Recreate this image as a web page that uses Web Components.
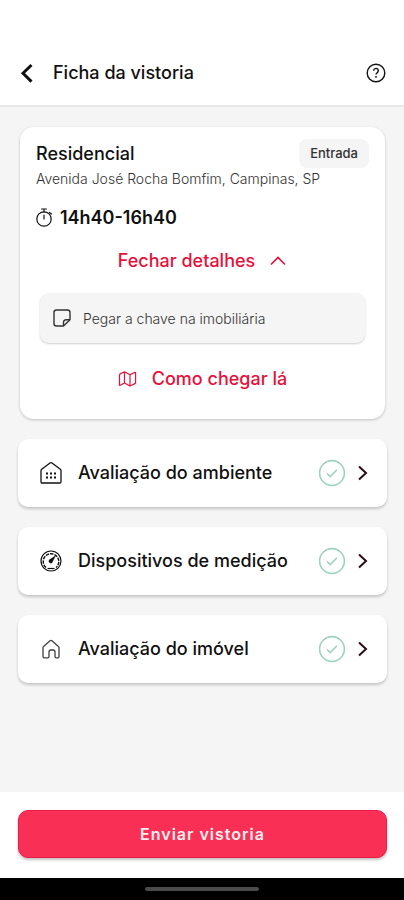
<!DOCTYPE html>
<html lang="pt-BR">
<head>
<meta charset="UTF-8">
<meta name="viewport" content="width=device-width, initial-scale=1.0">
<title>Ficha da vistoria</title>
<style>
    body{
        margin: 0;
        font-family: Inter, 'Liberation Sans', sans-serif;
        color: #111;
        background: #f5f5f5;
    }
</style>
</head>
<body>

<inspection-page>
    <page-header slot="header" page-title="Ficha da vistoria"></page-header>

    <visit-card kind="Residencial" address="Avenida José Rocha Bomfim, Campinas, SP" tag="Entrada" time="14h40-16h40">
        <visit-note>Pegar a chave na imobiliária</visit-note>
    </visit-card>

    <step-item icon="building">Avaliação do ambiente</step-item>
    <step-item icon="gauge">Dispositivos de medição</step-item>
    <step-item icon="home">Avaliação do imóvel</step-item>

    <submit-bar slot="footer">Enviar vistoria</submit-bar>
</inspection-page>

<script>
// all the icons of the page, drawn with currentColor
const icons = {
    back: '<svg width="24" height="24" viewBox="0 0 24 24" fill="none" stroke="currentColor" stroke-width="3"><path d="M16.500 4 8 12.300l8.500 8.300"/></svg>',
    help: '<svg width="20" height="20" viewBox="0 0 20 20" fill="none" stroke="currentColor" stroke-width="1.400"><circle cx="10" cy="10" r="8.800"/><path d="M7.700 7.700a2.300 2.300 0 1 1 3.600 1.900c-.8.5-1.300.9-1.300 1.900M10 13v1.800"/></svg>',
    timer: '<svg width="17" height="20" viewBox="0 0 17 20" fill="none" stroke="currentColor" stroke-width="1.200" stroke-linecap="round"><circle cx="8" cy="11" r="7.200"/><path d="M5.500 1h5M8 1v2.800M8 7v4M13.500 4.500l2 1.500"/></svg>',
    up: '<svg width="18" height="12" viewBox="0 0 18 12" fill="none" stroke="currentColor" stroke-width="1.600"><path d="m2 9.500 7-7 7 7"/></svg>',
    note: '<svg width="20" height="20" viewBox="0 0 20 20" fill="none" stroke="currentColor" stroke-width="1.400" stroke-linejoin="round"><path d="M11.500 18H4.500A2.500 2.500 0 0 1 2 15.500v-11A2.500 2.500 0 0 1 4.500 2h11A2.500 2.500 0 0 1 18 4.500v7.200z"/><path d="M11.500 18v-3.500a2.800 2.800 0 0 1 2.800-2.800H18"/></svg>',
    map: '<svg width="20" height="18" viewBox="0 0 20 18" fill="none" stroke="currentColor" stroke-width="1.200" stroke-linejoin="round"><path d="M1.500 5q0-.8.700-1.100L6.500 1.800l5.500 3 4.800-2.400q.8-.3.800.6v9.500q0 .8-.7 1.100L12 16l-5.500-3-4.200 2.300q-.8.400-.8-.6zM6.500 1.800V13M12 4.800V16"/></svg>',
    building: '<svg width="24" height="24" viewBox="0 0 24 24" fill="none" stroke="currentColor" stroke-width="1.300" stroke-linejoin="round"><path d="M2 9.500Q2 8.700 2.700 8.200L11 2q1-.7 2 0l8.300 6.200q.7.500.7 1.300v11.200q0 1.300-1.300 1.300H3.300Q2 22 2 20.700z"/><path d="M7 12.500h2m2 0h2m2 0h2M7 16.500h2m2 0h2m2 0h2" stroke-width="1.900"/></svg>',
    gauge: '<svg width="24" height="24" viewBox="0 0 24 24" fill="none" stroke="currentColor" stroke-width="1.200"><circle cx="12" cy="12" r="10"/><path d="M7 18.500a7.800 7.800 0 1 1 10 0" stroke-width="1.400" stroke-dasharray="3.500 1"/><path d="M8.500 19.500h7"/><path d="m17 6.300-6.500 4.300a2 2 0 1 0 2.800 2.800z" fill="currentColor" stroke="none"/></svg>',
    home: '<svg width="24" height="24" viewBox="0 0 24 24" fill="none" stroke="currentColor" stroke-width="1.300" stroke-linejoin="round" opacity=".8"><path d="M4 10.800q0-.8.600-1.300l6.400-5.700q1-.8 2 0l6.400 5.700q.6.500.6 1.300v8.700q0 1.300-1.300 1.300h-1.400q-1.300 0-1.300-1.300V15q0-2-2-2h-2q-2 0-2 2v4.500q0 1.300-1.300 1.300H5.300Q4 20.800 4 19.500z"/></svg>',
    check: '<svg width="28" height="28" viewBox="0 0 28 28" fill="none" stroke="currentColor" stroke-width="1.600"><circle cx="14" cy="14" r="12.400"/><path d="m9 14.300 3.300 3.300 6.700-6.800"/></svg>',
    next: '<svg width="12" height="18" viewBox="0 0 12 18" fill="none" stroke="currentColor" stroke-width="2"><path d="m2 2.500 7 6.500-7 6.500"/></svg>'
};

class InspectionPage extends HTMLElement{

constructor(){
    super();
    this.attachShadow({mode: 'open'})
}

connectedCallback(){
    this.shadowRoot.innerHTML = `
    <style>
    :host{
        display: flex;
        flex-direction: column;
        min-height: 100vh;
    }
    main{
        flex: 1;
        display: flex;
        flex-direction: column;
        gap: 20px;
        padding: 20px 17px 20px 18px;
    }
    </style>
    <slot name="header"></slot>
    <main><slot></slot></main>
    <slot name="footer"></slot>
    `
}
}

class PageHeader extends HTMLElement{

constructor(){
    super();
    this.attachShadow({mode: 'open'})
}

connectedCallback(){
    this.shadowRoot.innerHTML = `
    <style>
    :host{
        display: block;
        background: #fff;
        border-bottom: 2px solid #e8e8e8;
    }
    header{
        display: flex;
        align-items: center;
        gap: 14px;
        padding: 60px 18px 20px 15px;
    }
    h1{
        flex: 1;
        margin: 0;
        font-size: 18px;
        line-height: 25px;
        font-weight: 500;
    }
    button{
        display: flex;
        padding: 0;
        border: 0;
        background: none;
        color: #111;
        cursor: pointer;
    }
    </style>
    <header>
        <button type="button" aria-label="Voltar">${icons.back}</button>
        <h1>${this.getAttribute('page-title')}</h1>
        <button type="button" aria-label="Ajuda">${icons.help}</button>
    </header>
    `
}
}

class VisitCard extends HTMLElement{

constructor(){
    super();
    this.attachShadow({mode: 'open'})
}

connectedCallback(){
    this.render()
}

render(){
    this.shadowRoot.innerHTML = `
    <style>
    :host{
        display: block;
        margin: 0 2px;
        padding: 11px 16px 28px;
        border-radius: 14px;
        background: #fff;
        box-shadow: 0 1px 3px rgba(0, 0, 0, .22);
    }
    .top{
        display: flex;
        align-items: center;
        justify-content: space-between;
        height: 30px;
    }
    h2{
        margin: 0;
        font-size: 18px;
        font-weight: 500;
    }
    .tag{
        padding: 0 11px;
        border-radius: 8px;
        background: #f5f5f5;
        font-size: 13px;
        line-height: 29px;
        font-weight: 500;
        color: #333;
    }
    p{
        margin: 0;
    }
    .address{
        font-size: 14px;
        line-height: 21px;
        font-weight: 300;
        color: #333;
    }
    .time{
        display: flex;
        align-items: center;
        gap: 7px;
        margin-top: 17px;
        font-size: 18px;
        line-height: 24px;
        font-weight: 600;
    }
    .action{
        display: flex;
        align-items: center;
        justify-content: center;
        gap: 14px;
        width: 100%;
        padding: 0;
        border: 0;
        background: none;
        font: 500 18px/24px Inter, 'Liberation Sans', sans-serif;
        color: #e8103a;
        text-decoration: none;
        cursor: pointer;
    }
    button{
        margin: 19px 0 20px;
    }
    a{
        margin-top: 24px;
    }
    </style>
    <div class="top">
        <h2>${this.getAttribute('kind')}</h2>
        <span class="tag">${this.getAttribute('tag')}</span>
    </div>
    <p class="address">${this.getAttribute('address')}</p>
    <p class="time">${icons.timer}<span>${this.getAttribute('time')}</span></p>
    <button class="action" type="button" aria-expanded="true"><span>Fechar detalhes</span>${icons.up}</button>
    <slot></slot>
    <a class="action" href="#mapa">${icons.map}<span>Como chegar lá</span></a>
    `
}
}

class VisitNote extends HTMLElement{

constructor(){
    super();
    this.attachShadow({mode: 'open'})
}

connectedCallback(){
    this.shadowRoot.innerHTML = `
    <style>
    :host{
        display: flex;
        align-items: center;
        gap: 11px;
        min-height: 50px;
        margin: 0 4px;
        padding: 0 12px;
        border-radius: 9px;
        background: #f5f5f5;
        box-shadow: 0 1px 2px rgba(0, 0, 0, .2);
        font-size: 14px;
        font-weight: 300;
        color: #333;
    }
    </style>
    ${icons.note}
    <span><slot></slot></span>
    `
}
}

class StepItem extends HTMLElement{

constructor(){
    super();
    this.attachShadow({mode: 'open'})
}

connectedCallback(){
    this.shadowRoot.innerHTML = `
    <style>
    :host{
        display: block;
    }
    button{
        display: flex;
        align-items: center;
        width: 100%;
        min-height: 68px;
        padding: 0 18px 0 21px;
        border: 0;
        border-radius: 10px;
        background: #fff;
        box-shadow: 0 2px 3px rgba(0, 0, 0, .2);
        font: 500 18px/24px Inter, 'Liberation Sans', sans-serif;
        color: #111;
        text-align: left;
        cursor: pointer;
    }
    .label{
        flex: 1;
        margin-left: 15px;
    }
    .done{
        display: flex;
        margin-right: 11px;
        color: #9dd3be;
    }
    .next{
        display: flex;
        color: #2b0d16;
    }
    </style>
    <button type="button">
        ${icons[this.getAttribute('icon')]}
        <span class="label"><slot></slot></span>
        <span class="done">${icons.check}</span>
        <span class="next">${icons.next}</span>
    </button>
    `
}
}

class SubmitBar extends HTMLElement{

constructor(){
    super();
    this.attachShadow({mode: 'open'})
}

connectedCallback(){
    this.shadowRoot.innerHTML = `
    <style>
    :host{
        display: block;
        background: #fff;
    }
    .box{
        padding: 18px 17px 20px 18px;
    }
    button{
        width: 100%;
        height: 48px;
        border: 1px solid #ee1a48;
        border-radius: 10px;
        background: #fa2f55;
        box-shadow: 0 2px 3px rgba(0, 0, 0, .25);
        font: 600 16px/24px Inter, 'Liberation Sans', sans-serif;
        letter-spacing: 1px;
        color: #ffeef1;
        cursor: pointer;
    }
    /* system gesture bar */
    .system{
        display: flex;
        justify-content: center;
        align-items: center;
        height: 22px;
        background: #000;
    }
    .system span{
        width: 28%;
        height: 4px;
        border-radius: 2px;
        background: #4b4b4b;
    }
    </style>
    <div class="box"><button type="button"><slot></slot></button></div>
    <div class="system"><span></span></div>
    `
}
}

customElements.define('inspection-page', InspectionPage);
customElements.define('page-header', PageHeader);
customElements.define('visit-card', VisitCard);
customElements.define('visit-note', VisitNote);
customElements.define('step-item', StepItem);
customElements.define('submit-bar', SubmitBar);
</script>
</body>
</html>
